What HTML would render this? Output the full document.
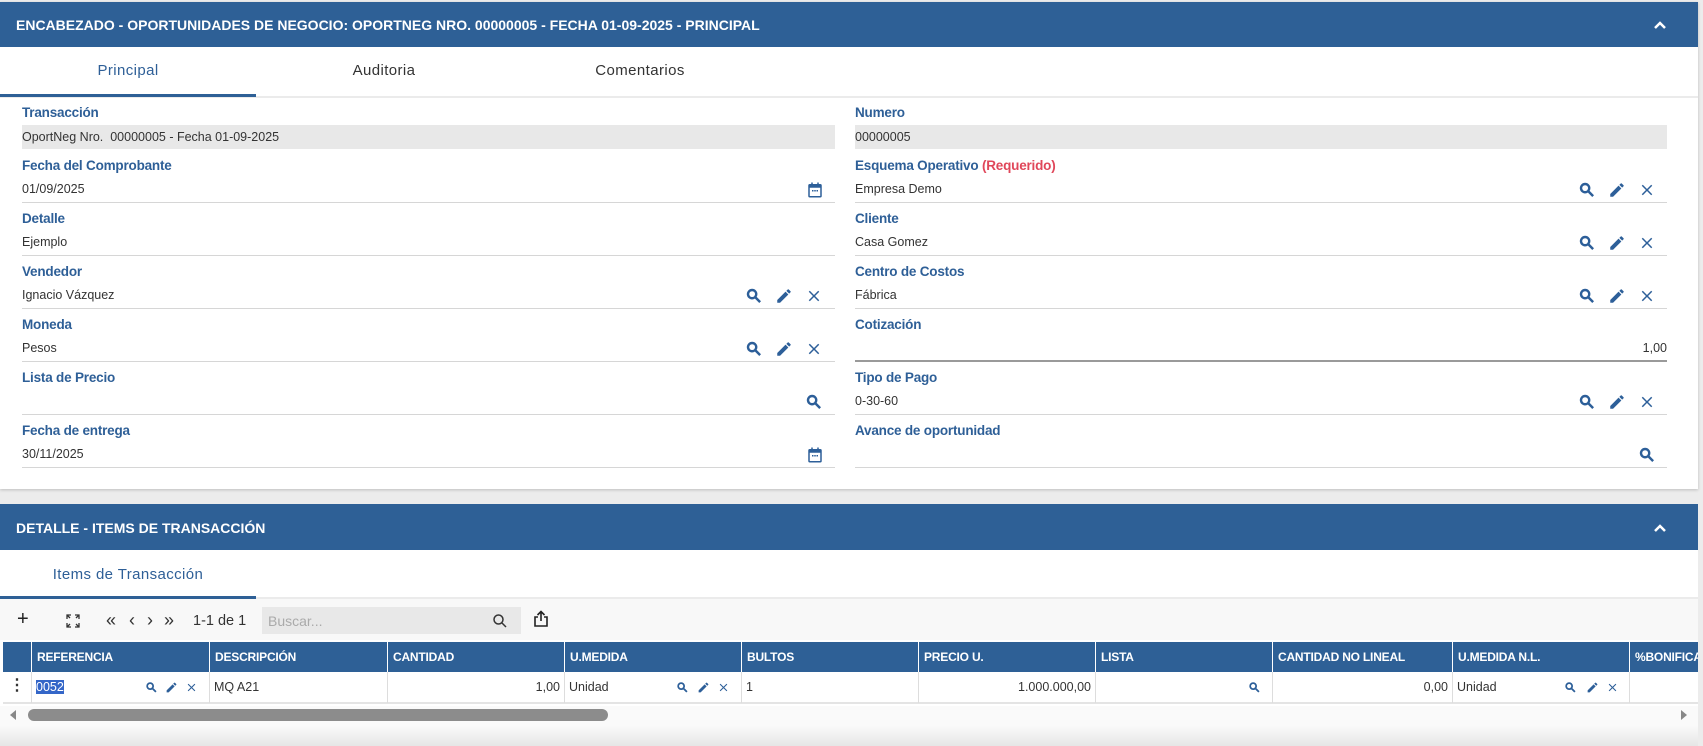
<!DOCTYPE html>
<html><head><meta charset="utf-8"><style>
*{margin:0;padding:0;box-sizing:border-box}
body{width:1703px;height:746px;background:#ececec;font-family:"Liberation Sans",sans-serif;position:relative;overflow:hidden}
.a{position:absolute}
.hdr{background:#2e6096;color:#fff;font-weight:bold;font-size:14px;letter-spacing:0}
.lbl{position:absolute;color:#2e5f97;font-weight:bold;font-size:13.5px;letter-spacing:-0.2px;white-space:nowrap}
.val{position:absolute;color:#333;font-size:12.5px;white-space:nowrap}
.ul{position:absolute;height:1px;background:#d6d6d6}
.ic{position:absolute;width:18px;height:18px;fill:#2d5f99}
.th{position:absolute;top:0;height:30px;line-height:30px;color:#fff;font-weight:bold;font-size:12px;padding-left:5px;border-left:1px solid #fff;white-space:nowrap;overflow:hidden;letter-spacing:-0.2px}
.td{position:absolute;top:0;height:31px;line-height:31px;color:#333;font-size:12.5px;padding:0 4px;border-left:1px solid #ddd;white-space:nowrap;overflow:hidden}
.sm{position:absolute;width:13px;height:13px;fill:#2d5f99;top:9px}
.tab{position:absolute;text-align:center;font-size:15px;letter-spacing:0.4px}
</style></head><body>
<svg width="0" height="0" style="position:absolute">
<symbol id="s" viewBox="0 0 24 24"><path d="M15.5 14h-.79l-.28-.27A6.470 6.47 0 0 0 16 9.5 6.5 6.5 0 1 0 9.5 16c1.61 0 3.09-.59 4.23-1.57l.27.28v.79l5 4.99L20.49 19l-4.99-5zm-6 0C7.01 14 5 11.99 5 9.5S7.01 5 9.5 5 14 7.01 14 9.5 11.99 14 9.5 14z" stroke="#2d5f99" stroke-width="1.2"/></symbol>
<symbol id="e" viewBox="0 0 24 24"><path d="M3 17.25V21h3.75L17.81 9.94l-3.75-3.75L3 17.25zM20.71 7.04a1 1 0 0 0 0-1.41l-2.34-2.34a1 1 0 0 0-1.41 0l-1.83 1.83 3.75 3.75 1.83-1.83z"/></symbol>
<symbol id="x" viewBox="0 0 24 24"><path d="M19 6.41L17.59 5 12 10.59 6.41 5 5 6.41 10.59 12 5 17.59 6.41 19 12 13.41 17.59 19 19 17.59 13.41 12z"/></symbol>
<symbol id="c" viewBox="0 0 24 24"><path d="M7 2h2v2h6V2h2v2h2a2 2 0 0 1 2 2v14a2 2 0 0 1-2 2H5a2 2 0 0 1-2-2V6a2 2 0 0 1 2-2h2zM5 9v11h14V9zm3 3h2v2H8zm3 0h2v2h-2zm3 0h2v2h-2z"/></symbol>
</svg>

<!-- Panel 1 -->
<div class="a" style="left:0;top:2px;width:1698px;height:487px;background:#fff;box-shadow:0 1px 3px rgba(0,0,0,.2)"></div>
<div class="a hdr" style="left:0;top:2px;width:1698px;height:45px;line-height:47px;padding-left:16px">ENCABEZADO - OPORTUNIDADES DE NEGOCIO: OPORTNEG NRO. 00000005 - FECHA 01-09-2025 - PRINCIPAL</div>
<svg class="a" style="left:1652px;top:18px" width="16" height="14" viewBox="0 0 16 14"><path d="M3 10l5-5 5 5" stroke="#fff" stroke-width="2.5" fill="none"/></svg>
<div class="a" style="left:0;top:96px;width:1698px;height:2px;background:#ebebeb"></div>
<div class="a" style="left:0;top:94px;width:256px;height:3px;background:#2e6096"></div>
<div class="tab" style="left:0;top:62px;width:256px;color:#2e5f97">Principal</div>
<div class="tab" style="left:256px;top:62px;width:256px;color:#333">Auditoria</div>
<div class="tab" style="left:512px;top:62px;width:256px;color:#333">Comentarios</div>

<!-- left column -->
<div class="lbl" style="left:22px;top:105px">Transacción</div>
<div class="a" style="left:22px;top:125px;width:813px;height:24px;background:#e8e8e8"></div>
<div class="val" style="left:22px;top:130px">OportNeg Nro.&nbsp; 00000005 - Fecha 01-09-2025</div>

<div class="lbl" style="left:22px;top:158px">Fecha del Comprobante</div>
<div class="val" style="left:22px;top:182px">01/09/2025</div>
<svg class="ic" style="left:806px;top:181px"><use href="#c"/></svg>
<div class="ul" style="left:22px;top:202px;width:813px"></div>

<div class="lbl" style="left:22px;top:211px">Detalle</div>
<div class="val" style="left:22px;top:235px">Ejemplo</div>
<div class="ul" style="left:22px;top:255px;width:813px"></div>

<div class="lbl" style="left:22px;top:264px">Vendedor</div>
<div class="val" style="left:22px;top:288px">Ignacio Vázquez</div>
<svg class="ic" style="left:745px;top:287px"><use href="#s"/></svg>
<svg class="ic" style="left:775px;top:287px"><use href="#e"/></svg>
<svg class="ic" style="left:805px;top:287px"><use href="#x"/></svg>
<div class="ul" style="left:22px;top:308px;width:813px"></div>

<div class="lbl" style="left:22px;top:317px">Moneda</div>
<div class="val" style="left:22px;top:341px">Pesos</div>
<svg class="ic" style="left:745px;top:340px"><use href="#s"/></svg>
<svg class="ic" style="left:775px;top:340px"><use href="#e"/></svg>
<svg class="ic" style="left:805px;top:340px"><use href="#x"/></svg>
<div class="ul" style="left:22px;top:361px;width:813px"></div>

<div class="lbl" style="left:22px;top:370px">Lista de Precio</div>
<svg class="ic" style="left:805px;top:393px"><use href="#s"/></svg>
<div class="ul" style="left:22px;top:414px;width:813px"></div>

<div class="lbl" style="left:22px;top:423px">Fecha de entrega</div>
<div class="val" style="left:22px;top:447px">30/11/2025</div>
<svg class="ic" style="left:806px;top:446px"><use href="#c"/></svg>
<div class="ul" style="left:22px;top:467px;width:813px"></div>

<!-- right column -->
<div class="lbl" style="left:855px;top:105px">Numero</div>
<div class="a" style="left:855px;top:125px;width:812px;height:24px;background:#e8e8e8"></div>
<div class="val" style="left:855px;top:130px">00000005</div>

<div class="lbl" style="left:855px;top:158px">Esquema Operativo <span style="color:#e0475a">(Requerido)</span></div>
<div class="val" style="left:855px;top:182px">Empresa Demo</div>
<svg class="ic" style="left:1578px;top:181px"><use href="#s"/></svg>
<svg class="ic" style="left:1608px;top:181px"><use href="#e"/></svg>
<svg class="ic" style="left:1638px;top:181px"><use href="#x"/></svg>
<div class="ul" style="left:855px;top:202px;width:812px"></div>

<div class="lbl" style="left:855px;top:211px">Cliente</div>
<div class="val" style="left:855px;top:235px">Casa Gomez</div>
<svg class="ic" style="left:1578px;top:234px"><use href="#s"/></svg>
<svg class="ic" style="left:1608px;top:234px"><use href="#e"/></svg>
<svg class="ic" style="left:1638px;top:234px"><use href="#x"/></svg>
<div class="ul" style="left:855px;top:255px;width:812px"></div>

<div class="lbl" style="left:855px;top:264px">Centro de Costos</div>
<div class="val" style="left:855px;top:288px">Fábrica</div>
<svg class="ic" style="left:1578px;top:287px"><use href="#s"/></svg>
<svg class="ic" style="left:1608px;top:287px"><use href="#e"/></svg>
<svg class="ic" style="left:1638px;top:287px"><use href="#x"/></svg>
<div class="ul" style="left:855px;top:308px;width:812px"></div>

<div class="lbl" style="left:855px;top:317px">Cotización</div>
<div class="val" style="left:1567px;top:341px;width:100px;text-align:right">1,00</div>
<div class="ul" style="left:855px;top:360px;width:812px;height:2px;background:#9a9a9a"></div>

<div class="lbl" style="left:855px;top:370px">Tipo de Pago</div>
<div class="val" style="left:855px;top:394px">0-30-60</div>
<svg class="ic" style="left:1578px;top:393px"><use href="#s"/></svg>
<svg class="ic" style="left:1608px;top:393px"><use href="#e"/></svg>
<svg class="ic" style="left:1638px;top:393px"><use href="#x"/></svg>
<div class="ul" style="left:855px;top:414px;width:812px"></div>

<div class="lbl" style="left:855px;top:423px">Avance de oportunidad</div>
<svg class="ic" style="left:1638px;top:446px"><use href="#s"/></svg>
<div class="ul" style="left:855px;top:467px;width:812px"></div>

<!-- Panel 2 -->
<div class="a" style="left:0;top:504px;width:1698px;height:242px;background:#fff"></div>
<div class="a hdr" style="left:0;top:504px;width:1698px;height:46px;line-height:48px;padding-left:16px">DETALLE - ITEMS DE TRANSACCIÓN</div>
<svg class="a" style="left:1652px;top:521px" width="16" height="14" viewBox="0 0 16 14"><path d="M3 10l5-5 5 5" stroke="#fff" stroke-width="2.5" fill="none"/></svg>
<div class="tab" style="left:0;top:566px;width:256px;color:#2e5f97">Items de Transacción</div>
<div class="a" style="left:0;top:597px;width:1698px;height:2px;background:#ebebeb"></div>
<div class="a" style="left:0;top:596px;width:256px;height:3px;background:#2e6096"></div>

<!-- toolbar -->
<div class="a" style="left:0;top:599px;width:1698px;height:41px;background:#f8f8f8"></div>
<div class="a" style="left:17px;top:608px;font-size:20px;color:#222">+</div>
<svg class="a" style="left:65px;top:613px" width="16" height="16" viewBox="0 0 16 16" fill="none" stroke="#333" stroke-width="1.3"><path d="M2 6V2h4M2 2l3 3M14 6V2h-4M14 2l-3 3M2 10v4h4M2 14l3-3M14 10v4h-4M14 14l-3-3"/></svg>
<div class="a" style="left:106px;top:610px;font-size:18px;color:#333">«</div>
<div class="a" style="left:129px;top:610px;font-size:18px;color:#333">‹</div>
<div class="a" style="left:147px;top:610px;font-size:18px;color:#333">›</div>
<div class="a" style="left:164px;top:610px;font-size:18px;color:#333">»</div>
<div class="a" style="left:193px;top:613px;font-size:14.5px;color:#333">1-1 de 1</div>
<div class="a" style="left:262px;top:607px;width:259px;height:27px;background:#e8e8e8"></div>
<div class="a" style="left:268px;top:613px;font-size:14px;color:#aaa">Buscar...</div>
<svg class="a" style="left:492px;top:613px" width="16" height="16" viewBox="0 0 16 16" fill="none" stroke="#333" stroke-width="1.5"><circle cx="6.5" cy="6.5" r="4.5"/><path d="M10 10l4 4"/></svg>
<svg class="a" style="left:533px;top:610px" width="16" height="18" viewBox="0 0 16 18" fill="none" stroke="#222" stroke-width="1.6"><path d="M8 11V2M4.5 5L8 1.5 11.5 5M5 7H2v9h12V7h-3"/></svg>

<!-- table -->
<div class="a" style="left:3px;top:642px;width:1695px;height:30px;background:#2e6096">
<div class="th" style="left:0;width:28px;border-left:0"></div>
<div class="th" style="left:28px;width:178px">REFERENCIA</div>
<div class="th" style="left:206px;width:178px">DESCRIPCIÓN</div>
<div class="th" style="left:384px;width:177px">CANTIDAD</div>
<div class="th" style="left:561px;width:177px">U.MEDIDA</div>
<div class="th" style="left:738px;width:177px">BULTOS</div>
<div class="th" style="left:915px;width:177px">PRECIO U.</div>
<div class="th" style="left:1092px;width:177px">LISTA</div>
<div class="th" style="left:1269px;width:180px">CANTIDAD NO LINEAL</div>
<div class="th" style="left:1449px;width:177px">U.MEDIDA N.L.</div>
<div class="th" style="left:1626px;width:69px">%BONIFICACIÓN</div>
</div>
<div class="a" style="left:3px;top:672px;width:1695px;height:32px;background:#fff;border-bottom:2px solid #e4e4e4">
<div class="td" style="left:0;width:28px;border-left:0;text-align:center;font-weight:bold;font-size:16px;line-height:28px">⋮</div>
<div class="td" style="left:28px;width:178px"><span style="background:#3466c8;color:#fff">0052</span></div>
<svg class="sm" style="left:142px"><use href="#s"/></svg><svg class="sm" style="left:162px"><use href="#e"/></svg><svg class="sm" style="left:182px"><use href="#x"/></svg>
<div class="td" style="left:206px;width:178px">MQ A21</div>
<div class="td" style="left:384px;width:177px;text-align:right">1,00</div>
<div class="td" style="left:561px;width:177px">Unidad</div>
<svg class="sm" style="left:673px"><use href="#s"/></svg><svg class="sm" style="left:694px"><use href="#e"/></svg><svg class="sm" style="left:714px"><use href="#x"/></svg>
<div class="td" style="left:738px;width:177px">1</div>
<div class="td" style="left:915px;width:177px;text-align:right">1.000.000,00</div>
<div class="td" style="left:1092px;width:177px"></div>
<svg class="sm" style="left:1245px"><use href="#s"/></svg>
<div class="td" style="left:1269px;width:180px;text-align:right">0,00</div>
<div class="td" style="left:1449px;width:177px">Unidad</div>
<svg class="sm" style="left:1561px"><use href="#s"/></svg><svg class="sm" style="left:1583px"><use href="#e"/></svg><svg class="sm" style="left:1603px"><use href="#x"/></svg>
<div class="td" style="left:1626px;width:69px"></div>
</div>
<!-- scrollbar -->
<div class="a" style="left:0;top:706px;width:1698px;height:20px;background:#fafafa"></div>
<svg class="a" style="left:9px;top:709px" width="8" height="12"><path d="M7 1L1 6l6 5z" fill="#888"/></svg>
<div class="a" style="left:28px;top:709px;width:580px;height:12px;border-radius:6px;background:#8c8c8c"></div>
<svg class="a" style="left:1680px;top:709px" width="8" height="12"><path d="M1 1l6 5-6 5z" fill="#888"/></svg>
<div class="a" style="left:0;top:726px;width:1698px;height:20px;background:linear-gradient(#fafafa,#e6e6e6)"></div>
</body></html>
